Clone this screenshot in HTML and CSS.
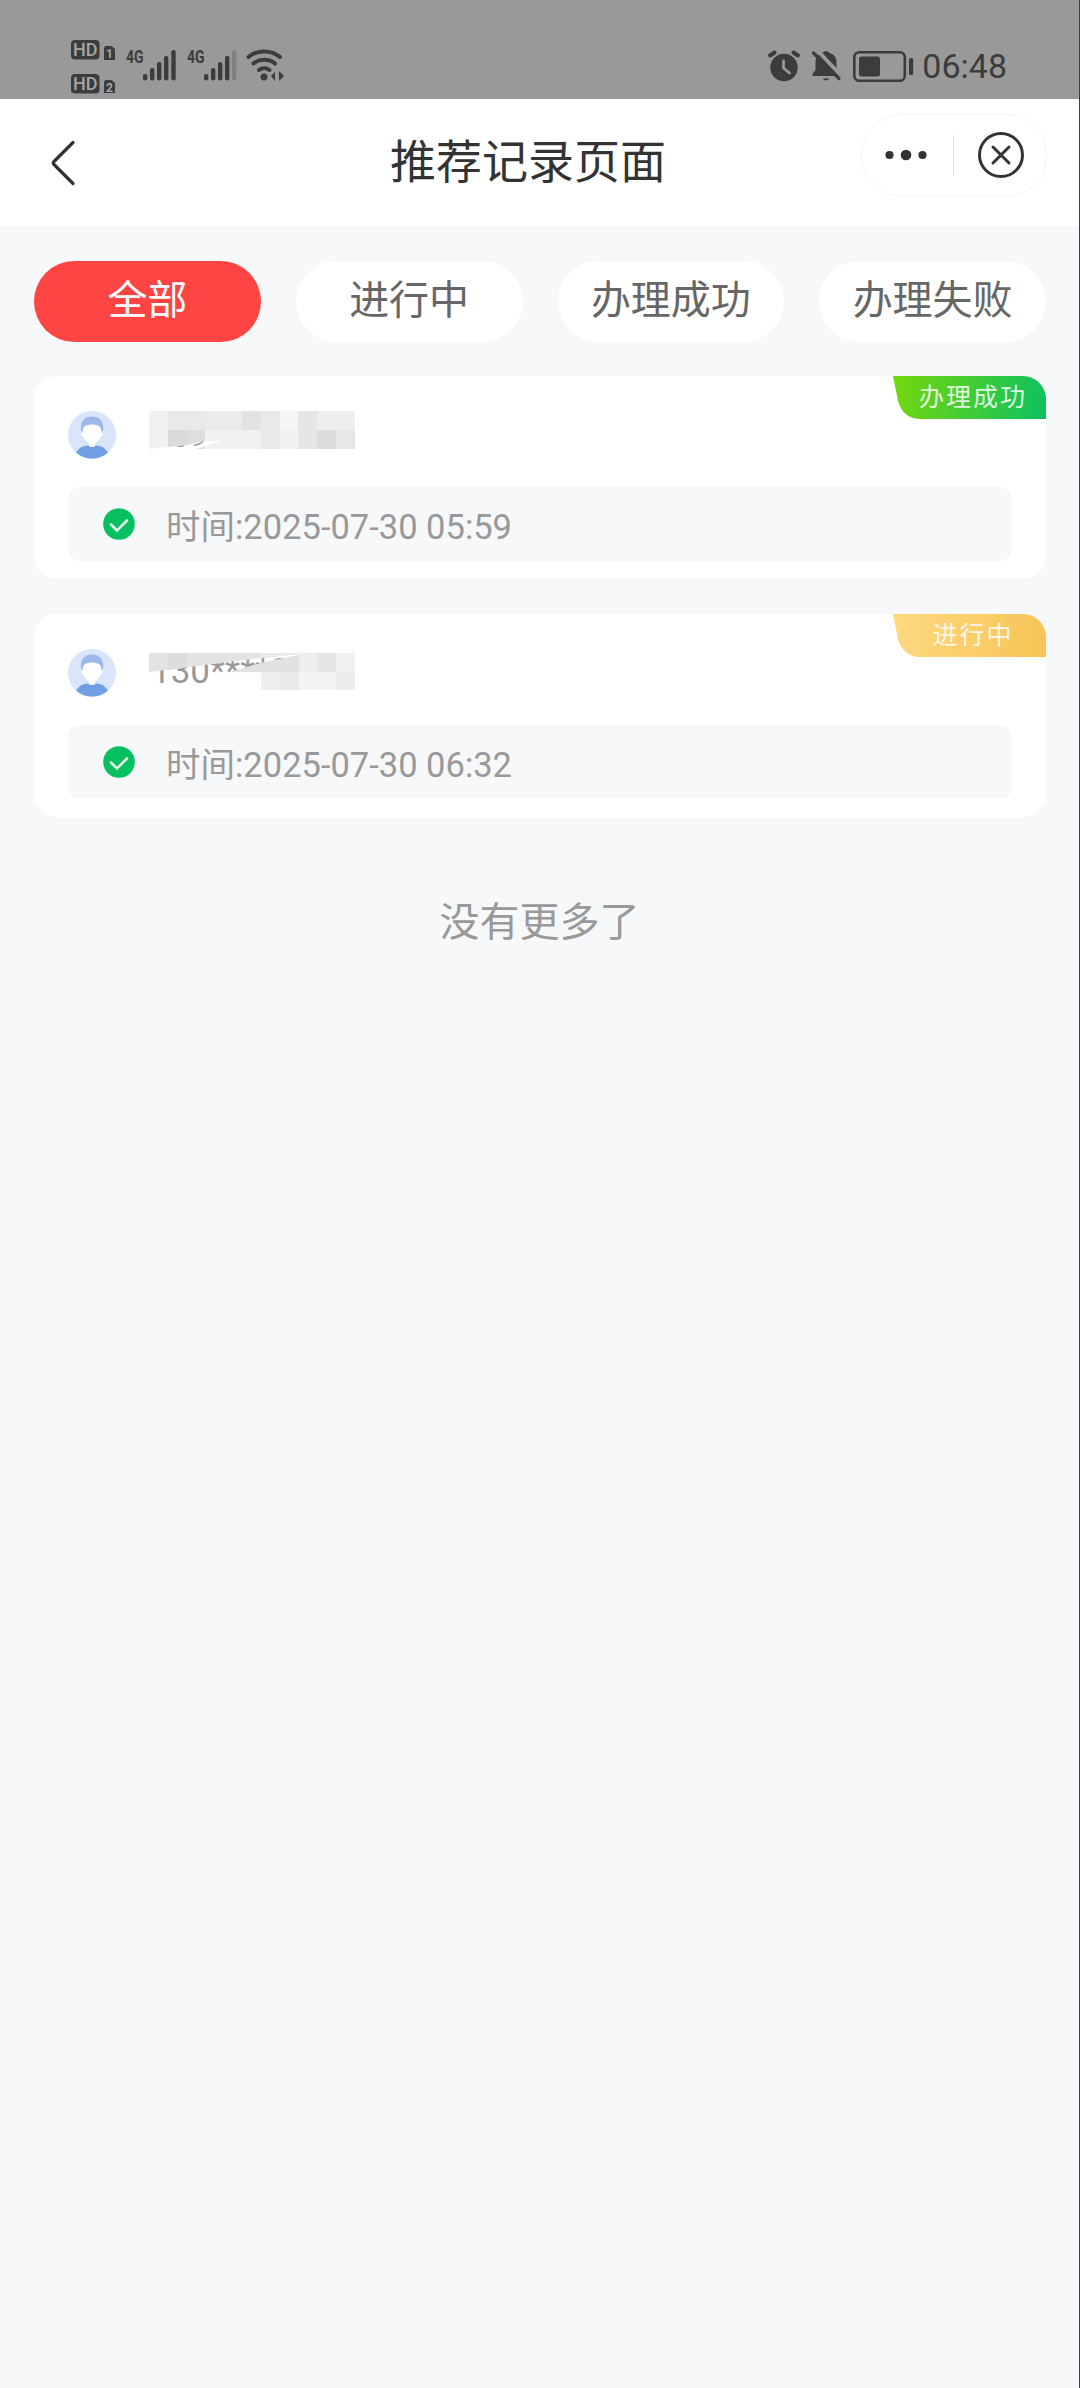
FILE: index.html
```html
<!DOCTYPE html>
<html lang="zh-CN">
<head>
  <meta charset="UTF-8">
  <title>推荐记录页面</title>
  <link rel="stylesheet" href="styles.css">
</head>
<body>
  <div class="status-bar">
    <svg class="status-left" width="220" height="60" viewBox="70 39 220 60">
      <g fill="#3c3c3c">
        <rect x="71" y="40" width="28.5" height="19.5" rx="4"/>
        <rect x="71" y="74" width="28.5" height="19.5" rx="4"/>
        <path d="M105.500 46h6l3.500 3v11h-11V47.500z"/>
        <path d="M105.500 80h6l3.500 3v10h-11V81.500z"/>
        <rect x="143" y="74" width="4.4" height="6.5" rx="2"/>
        <rect x="150" y="68" width="4.4" height="12.5" rx="2"/>
        <rect x="157" y="62" width="4.4" height="18.5" rx="2"/>
        <rect x="164" y="56" width="4.4" height="24.5" rx="2"/>
        <rect x="171.3" y="50" width="4.4" height="30.5" rx="2"/>
        <rect x="204" y="74" width="4.4" height="6.5" rx="2"/>
        <rect x="211" y="68" width="4.4" height="12.5" rx="2"/>
        <rect x="218" y="62" width="4.4" height="18.5" rx="2"/>
        <rect x="225" y="56" width="4.4" height="24.5" rx="2"/>
        <rect x="232" y="50" width="4.4" height="30.5" rx="2" opacity=".25"/>
        <circle cx="264" cy="77" r="3.5"/>
        <path d="M271 76l4-4v9zM279 71l5 5-5 5z"/>
      </g>
      <g fill="none" stroke="#3c3c3c" stroke-width="4" stroke-linecap="round">
        <path d="M248.500 57C257 49.500 271.500 49.500 280 57"/>
        <path d="M253.500 63.500C259.500 58.500 269 58.500 275 63.500"/>
        <path d="M259 70C262 67.500 266.500 67.500 269.500 70"/>
      </g>
      <text class="hd" x="73" y="56" textLength="24.500" lengthAdjust="spacingAndGlyphs">HD</text>
      <text class="hd" x="73" y="90" textLength="24.500" lengthAdjust="spacingAndGlyphs">HD</text>
      <text class="sim" x="106" y="58">1</text>
      <text class="sim" x="106" y="91.500">2</text>
      <text class="net" x="126" y="63" textLength="17.500" lengthAdjust="spacingAndGlyphs">4G</text>
      <text class="net" x="187" y="63" textLength="17.500" lengthAdjust="spacingAndGlyphs">4G</text>
    </svg>
    <div class="status-right">
      <svg width="148" height="34" viewBox="768 48 148 34">
        <circle cx="785" cy="66.500" r="13.700" fill="#3c3c3c"/>
        <path d="M784.500 60v7l6 5" fill="none" stroke="#999" stroke-width="2.800" stroke-linecap="round" stroke-linejoin="round"/>
        <path d="M771 54.500l4.500-3M799 54.500l-4.500-3" stroke="#3c3c3c" stroke-width="4" stroke-linecap="round"/>
        <path d="M813.500 75v-2l3-4v-8c0-5 3-8 7-9 1-2.500 6-2.500 7 0 4 1 7 4 7 9v8l3 4v2z" fill="#3c3c3c"/>
        <path d="M823.500 77.500h7q-3.500 4-7 0z" fill="#3c3c3c"/>
        <path d="M817 48l25 26.500" stroke="#999" stroke-width="4"/>
        <path d="M814.500 52l25.500 25.500" stroke="#3c3c3c" stroke-width="3.200" stroke-linecap="round"/>
        <rect x="855.300" y="51.200" width="50.500" height="28.600" rx="5" fill="none" stroke="#3c3c3c" stroke-width="2.600"/>
        <rect x="860" y="55.500" width="21" height="20" rx="2.500" fill="#3c3c3c"/>
        <rect x="910" y="57" width="4.200" height="17" rx="1.500" fill="#3c3c3c"/>
      </svg>
      <span class="clock">06:48</span>
    </div>
  </div>

  <div class="header">
    <svg class="back" width="26" height="48" viewBox="0 0 26 48">
      <path d="M23 3.500L4 22.500q-1.500 1.500 0 3L23 44.500" fill="none" stroke="#333" stroke-width="3.200" stroke-linecap="round"/>
    </svg>
    <h1 class="title">推荐记录页面</h1>
    <div class="capsule">
      <svg width="42" height="14" viewBox="0 0 42 14" fill="#333">
        <circle cx="4.500" cy="7" r="4.100"/>
        <circle cx="21" cy="7" r="5.300"/>
        <circle cx="37.500" cy="7" r="4.100"/>
      </svg>
      <span class="divider"></span>
      <svg width="48" height="48" viewBox="0 0 48 48" fill="none" stroke="#333" stroke-width="3" stroke-linecap="round">
        <circle cx="24" cy="24" r="21.500"/>
        <path d="M16 16l16 16M32 16L16 32"/>
      </svg>
    </div>
  </div>

  <div class="tabs">
    <div class="tab active">全部</div>
    <div class="tab">进行中</div>
    <div class="tab">办理成功</div>
    <div class="tab">办理失败</div>
  </div>

  <div class="list">
    <div class="card">
      <div class="badge success">办理成功</div>
      <div class="user">
        <svg class="avatar" width="48" height="48" viewBox="0 0 48 48">
          <circle cx="24" cy="24" r="24" fill="#d9e5fb"/>
          <path d="M13 20C11.500 10 17 5.500 24 5.500S36.500 10 35 20z" fill="#9db9ec"/>
          <path d="M15 19q0-3 3-4.500 6-2 12 0 3 1.500 3 4.500v3q2.500-.5 2 1-.8 2-2.500 3-2 4.500-5.500 6.500v4h-6v-4q-3.500-2-5.500-6.500-1.700-1-2.500-3-.5-1.500 2-1z" fill="#fff"/>
          <path d="M8 41.500Q12 34.500 20 34.500q4 3 8 0 8 0 12 7A24 24 0 0 1 8 41.500z" fill="#719fe4"/>
        </svg>
        <!-- masked phone number -->
        <svg class="mask" width="206" height="40" viewBox="0 0 206 40" shape-rendering="crispEdges">
          <rect width="206" height="38" fill="#f1f1f1"/>
          <rect x="19" width="38" height="19" fill="#e9e9e9"/>
          <rect x="57" width="36" height="19" fill="#ebebeb"/>
          <rect x="93" width="19" height="19" fill="#e3e3e3"/>
          <rect x="112" width="19" height="38" fill="#e9e9e9"/>
          <rect x="131" width="19" height="19" fill="#f5f5f5"/>
          <rect x="149" width="19" height="38" fill="#e6e6e6"/>
          <rect x="168" width="38" height="19" fill="#eee"/>
          <rect x="19" y="19" width="19" height="19" fill="#dadada"/>
          <rect x="38" y="19" width="18" height="19" fill="#dedede"/>
          <rect x="168" y="19" width="19" height="19" fill="#dcdcdc"/>
          <rect x="187" y="19" width="19" height="19" fill="#e7e7e7"/>
          <path d="M0 38L38 34 57 30l16 0L57 35 40 40H0z" fill="#fff" shape-rendering="auto"/>
          <path d="M27 36q4-1.800 8-1.600l-1 1.600zM45 35q6-.5 10-4.500l-2-.2q-2 2.500-8 3.200z" fill="#999" shape-rendering="auto"/>
        </svg>
      </div>
      <div class="time">
        <svg class="check" width="32" height="32" viewBox="0 0 32 32">
          <circle cx="16" cy="16" r="15.800" fill="#07c160"/>
          <path d="M8 16.500l6 6L24 12.500" fill="none" stroke="#e4f8ec" stroke-width="2.600" stroke-linecap="round"/>
        </svg>
        <span class="time-text">时间:2025-07-30 05:59</span>
      </div>
    </div>

    <div class="card">
      <div class="badge doing">进行中</div>
      <div class="user">
        <svg class="avatar" width="48" height="48" viewBox="0 0 48 48">
          <circle cx="24" cy="24" r="24" fill="#d9e5fb"/>
          <path d="M13 20C11.500 10 17 5.500 24 5.500S36.500 10 35 20z" fill="#9db9ec"/>
          <path d="M15 19q0-3 3-4.500 6-2 12 0 3 1.500 3 4.500v3q2.500-.5 2 1-.8 2-2.500 3-2 4.500-5.500 6.500v4h-6v-4q-3.500-2-5.500-6.500-1.700-1-2.500-3-.5-1.500 2-1z" fill="#fff"/>
          <path d="M8 41.500Q12 34.500 20 34.500q4 3 8 0 8 0 12 7A24 24 0 0 1 8 41.500z" fill="#719fe4"/>
        </svg>
        <svg class="mask lower" width="206" height="38" viewBox="0 0 206 38">
          <text class="phone" x="2" y="30">130****0</text>
          <!-- blocks above the number -->
          <path d="M0 0H158L114 5 71 10 34 15 0 19z" fill="#e3e3e3"/>
          <path d="M19 0h19v14.500l-19 2.500z" fill="#dcdcdc"/>
          <path d="M112 0h46l-44 5z" fill="#ebebeb"/>
          <!-- blocks below the number -->
          <path d="M81 19L101 13 114 9.500 158 0H168V37H112V19z" fill="#e1e1e1"/>
          <path d="M150 1.700L158 0h10v19h-18z" fill="#eee"/>
          <g shape-rendering="crispEdges">
            <rect x="168" y="0" width="19" height="19" fill="#e6e6e6"/>
            <rect x="187" y="0" width="19" height="19" fill="#f0f0f0"/>
            <rect x="112" y="19" width="19" height="18" fill="#eee"/>
            <rect x="131" y="19" width="19" height="18" fill="#e9e9e9"/>
            <rect x="150" y="19" width="37" height="18" fill="#f3f3f3"/>
            <rect x="187" y="19" width="19" height="18" fill="#ebebeb"/>
          </g>
        </svg>
      </div>
      <div class="time">
        <svg class="check" width="32" height="32" viewBox="0 0 32 32">
          <circle cx="16" cy="16" r="15.800" fill="#07c160"/>
          <path d="M8 16.500l6 6L24 12.500" fill="none" stroke="#e4f8ec" stroke-width="2.600" stroke-linecap="round"/>
        </svg>
        <span class="time-text">时间:2025-07-30 06:32</span>
      </div>
    </div>
  </div>

  <div class="no-more">没有更多了</div>
</body>
</html>
```

FILE: styles.css
```css
* {
  box-sizing: border-box;
}

body {
  margin: 0;
  min-height: 2388px;
  background: #f7f8fa;
  border-right: 1px solid #3b3f46;
  font-family: Roboto, "Noto Sans CJK SC", sans-serif;
}

svg {
  display: block;
  flex-shrink: 0;
}

.status-bar {
  display: flex;
  justify-content: space-between;
  height: 99px;
  padding: 39px 72px 0 70px;
  background: #999;
}

.status-right {
  display: flex;
  align-items: center;
  gap: 7px;
  height: 54px;
}

.clock {
  font-size: 34px;
  line-height: 34px;
  color: #3c3c3c;
}

.hd {
  font: 500 18px Roboto, sans-serif;
  fill: #a5a5a5;
}

.sim {
  font: 700 12px Roboto, sans-serif;
  fill: #a5a5a5;
}

.net {
  font: 700 18px Roboto, sans-serif;
  fill: #3c3c3c;
}

.header {
  display: flex;
  align-items: center;
  height: 127px;
  padding: 0 32px 0 50px;
  background: #fff;
}

.back {
  margin-right: 314px;
}

.title {
  margin: 0 0 2px;
  font-size: 46px;
  line-height: 60px;
  font-weight: 400;
  color: #333;
}

.capsule {
  display: flex;
  align-items: center;
  width: 186px;
  height: 83px;
  margin: 0 0 15px auto;
  padding: 0 21px 0 23px;
  border: 1px solid #f5f5f5;
  border-radius: 42px;
}

.divider {
  width: 2px;
  height: 41px;
  margin: 0 23px 0 26px;
  background: #e5e5e5;
}

.tabs {
  display: grid;
  grid-template-columns: repeat(4, 1fr);
  gap: 35px;
  padding: 35px 33px 34px 34px;
}

.tab {
  height: 81px;
  border-radius: 41px;
  background: #fff;
  color: #666;
  font-size: 40px;
  line-height: 79px;
  text-align: center;
}

.active {
  background: #ff4444;
  color: #fff;
}

.list {
  display: flex;
  flex-direction: column;
  gap: 35px;
  padding: 0 33px 0 34px;
}

.card {
  position: relative;
  height: 203px;
  padding: 35px 34px 0;
  border-radius: 23px;
  background: #fff;
  overflow: hidden;
}

.badge {
  position: absolute;
  top: 0;
  right: 0;
  width: 153px;
  height: 43px;
  padding-left: 7px;
  font-size: 25px;
  line-height: 44px;
  letter-spacing: 2px;
  text-align: center;
  color: rgba(255, 255, 255, 0.85);
  clip-path: path("M0 0H153V43H26Q10 42 5 25Z");
}

.success {
  background: linear-gradient(100deg, #77d70c, #0cc160);
}

.doing {
  background: linear-gradient(100deg, #fed981, #f6c455);
}

.user {
  display: flex;
  height: 76px;
}

.mask {
  margin-left: 33px;
}

.lower {
  margin-top: 4px;
}

.phone {
  font-size: 35px;
  fill: #999;
}

.time {
  display: flex;
  align-items: center;
  height: 74px;
  padding-left: 35px;
  border-radius: 12px;
  background: #f7f8fa;
}

.check {
  margin-right: 31px;
}

.time-text {
  padding-top: 5px;
  color: #999;
  font-size: 34.5px;
  line-height: 50px;
}

.no-more {
  margin-top: 76px;
  color: #999;
  font-size: 40px;
  line-height: 60px;
  text-align: center;
}
```
